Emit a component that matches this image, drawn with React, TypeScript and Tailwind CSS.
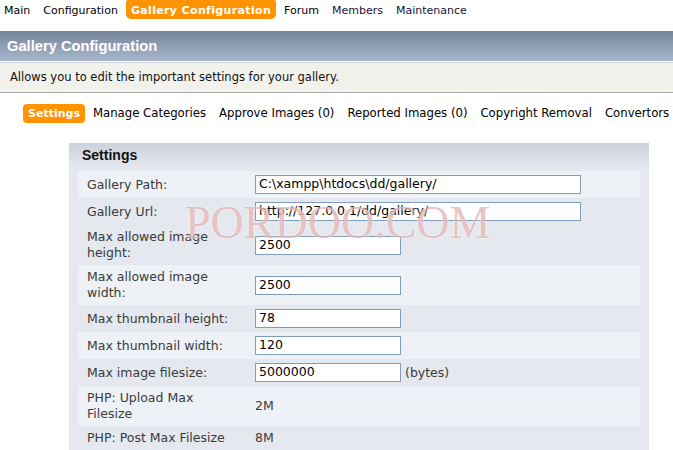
import React from 'react';

const navItems = [
  { label: 'Main', active: false, color: 'text-black' },
  { label: 'Configuration', active: false, color: 'text-black' },
  { label: 'Gallery Configuration', active: true, color: 'text-white' },
  { label: 'Forum', active: false, color: 'text-black' },
  { label: 'Members', active: false, color: 'text-[#2a0f3a]' },
  { label: 'Maintenance', active: false, color: 'text-[#14143a]' },
];

const subTabs = [
  { label: 'Settings', active: true },
  { label: 'Manage Categories', active: false },
  { label: 'Approve Images (0)', active: false },
  { label: 'Reported Images (0)', active: false },
  { label: 'Copyright Removal', active: false },
  { label: 'Convertors', active: false },
];

type Row = {
  label: string;
  value?: string;
  wide?: boolean;
  text?: string;
  suffix?: string;
  light: boolean;
};

const rows: Row[] = [
  { label: 'Gallery Path:', value: 'C:\\xampp\\htdocs\\dd/gallery/', wide: true, light: true },
  { label: 'Gallery Url:', value: 'http://127.0.0.1/dd/gallery/', wide: true, light: false },
  { label: 'Max allowed image height:', value: '2500', light: false },
  { label: 'Max allowed image width:', value: '2500', light: true },
  { label: 'Max thumbnail height:', value: '78', light: false },
  { label: 'Max thumbnail width:', value: '120', light: true },
  { label: 'Max image filesize:', value: '5000000', suffix: '(bytes)', light: false },
  { label: 'PHP: Upload Max Filesize', text: '2M', light: true },
  { label: 'PHP: Post Max Filesize', text: '8M', light: false },
];

const verdana = { fontFamily: '"DejaVu Sans", Verdana, sans-serif' };
const arial = { fontFamily: '"Liberation Sans", Arial, sans-serif' };

export default function App() {
  return (
    <div className="relative w-[673px] h-[450px] overflow-hidden bg-white text-[11px]" style={verdana}>
      {/* Top nav */}
      <div className="flex items-center gap-[3px] ml-[-1px] h-[19px]">
        {navItems.map((item) => (
          <div
            key={item.label}
            className={`h-[19px] px-[5px] pt-[1px] flex items-center leading-none whitespace-nowrap ${item.color} ${
              item.active ? 'bg-[#ff9400] font-bold tracking-[0.35px] rounded-b-[5px] rounded-t-[2px]' : ''
            }`}
          >
            {item.label}
          </div>
        ))}
      </div>

      {/* Page header */}
      <div className="mt-[12px] h-[30px] bg-gradient-to-b from-[#74849a] to-[#a9b8cc] flex items-center pl-[7px]">
        <span className="text-white font-bold text-[14.7px]" style={arial}>
          Gallery Configuration
        </span>
      </div>
      <div className="h-px bg-white" />
      <div className="h-[31px] bg-[#f2f2ed] border-t border-[#cfd3d8] border-b border-b-[#a9a9a9] flex items-center pl-[10px] text-[11.5px] text-[#111]">
        Allows you to edit the important settings for your gallery.
      </div>

      {/* Sub tabs */}
      <div className="flex items-center gap-[3px] pl-[23px] mt-[11px] h-[19px] text-[11.7px]">
        {subTabs.map((tab) => (
          <div
            key={tab.label}
            className={`h-[19px] px-[5px] flex items-center leading-none whitespace-nowrap ${
              tab.active ? 'bg-[#ff9400] text-white font-bold text-[11px] rounded-[4px]' : 'text-black'
            }`}
          >
            {tab.label}
          </div>
        ))}
      </div>

      {/* Settings panel */}
      <div className="ml-[69px] mt-[20px] w-[580px] bg-[#e5e8ee] pb-[10px]">
        <div className="h-[24px] bg-gradient-to-b from-[#ccd2db] to-[#e3e7ed] flex items-center pl-[13px]">
          <span className="font-bold text-[14px] text-[#111]" style={arial}>
            Settings
          </span>
        </div>
        <div className="px-[9px] pt-[4px] text-[12.5px] text-[#3a3a3a]">
          {rows.map((row) => (
            <div key={row.label} className={`flex items-center py-[4px] ${row.light ? 'bg-[#eef2f6]' : ''}`}>
              <div className="w-[177px] pl-[9px] pr-[20px] leading-[16px]">{row.label}</div>
              {row.value !== undefined ? (
                <div className="flex items-center gap-[4px]">
                  <div
                    className={`h-[19px] ${row.wide ? 'w-[326px]' : 'w-[146px]'} bg-white border border-[#7f9db9] flex items-center pl-[3px] text-black leading-none whitespace-nowrap`}
                  >
                    {row.value}
                  </div>
                  {row.suffix && <span className="leading-[16px]">{row.suffix}</span>}
                </div>
              ) : (
                <div className="leading-[16px]">{row.text}</div>
              )}
            </div>
          ))}
        </div>
      </div>

      {/* Watermark */}
      <div
        className="absolute left-[185px] top-[200px] text-[46px] leading-none pointer-events-none text-[rgba(190,70,70,0.32)]"
        style={{ fontFamily: '"Liberation Serif", "Times New Roman", serif', textShadow: '0 0 2px rgba(255,255,255,0.9)' }}
      >
        PORDOO.COM
      </div>
    </div>
  );
}
